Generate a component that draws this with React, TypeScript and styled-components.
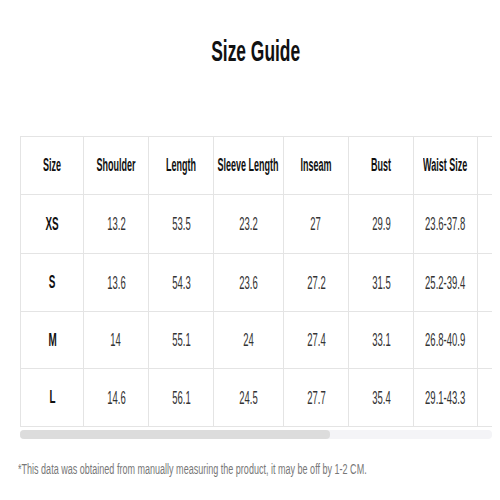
import React from "react";
import styled, { createGlobalStyle } from "styled-components";

const GlobalStyle = createGlobalStyle`
  html, body {
    margin: 0;
    padding: 0;
    background: #fff;
    font-family: "Liberation Sans", Arial, sans-serif;
  }
`;

const columns = [
  { label: "Size", width: 63 },
  { label: "Shoulder", width: 65 },
  { label: "Length", width: 65 },
  { label: "Sleeve Length", width: 70 },
  { label: "Inseam", width: 65 },
  { label: "Bust", width: 65 },
  { label: "Waist Size", width: 64 },
  { label: "", width: 65 },
];

const rows = [
  { size: "XS", values: ["13.2", "53.5", "23.2", "27", "29.9", "23.6-37.8", ""], height: 59 },
  { size: "S", values: ["13.6", "54.3", "23.6", "27.2", "31.5", "25.2-39.4", ""], height: 58 },
  { size: "M", values: ["14", "55.1", "24", "27.4", "33.1", "26.8-40.9", ""], height: 57 },
  { size: "L", values: ["14.6", "56.1", "24.5", "27.7", "35.4", "29.1-43.3", ""], height: 58 },
];

const App = () => {
  const template = columns.map((c) => `${c.width}px`).join(" ");

  return (
    <>
      <GlobalStyle />
      <Page>
        <Title>
          <Squish $scale={0.58}>Size Guide</Squish>
        </Title>
        <ScrollArea>
          <Grid style={{ gridTemplateColumns: template }}>
            {columns.map((c, i) => (
              <HeadCell key={`h${i}`} $height={58}>
                <Squish $scale={0.5}>{c.label}</Squish>
              </HeadCell>
            ))}
            {rows.map((r) => (
              <React.Fragment key={r.size}>
                <HeadCell $height={r.height}>
                  <Squish $scale={0.55}>{r.size}</Squish>
                </HeadCell>
                {r.values.map((v, j) => (
                  <Cell key={j} $height={r.height}>
                    <Squish $scale={0.5}>{v}</Squish>
                  </Cell>
                ))}
              </React.Fragment>
            ))}
          </Grid>
        </ScrollArea>
        <Track>
          <Thumb />
        </Track>
        <Note>
          <Squish $scale={0.645} $origin="left">
            *This data was obtained from manually measuring the product, it may
            be off by 1-2 CM.
          </Squish>
        </Note>
      </Page>
    </>
  );
};

const Page = styled.div`
  width: 500px;
  height: 500px;
  overflow: hidden;
  padding: 0 8px 0 20px;
  box-sizing: border-box;
`;

const Title = styled.h1`
  margin: 0;
  height: 136px;
  padding-bottom: 35px;
  box-sizing: border-box;
  display: flex;
  align-items: center;
  justify-content: center;
  font-size: 30px;
  font-weight: 700;
  color: #111;
`;

const Squish = styled.span<{ $scale: number; $origin?: string }>`
  display: inline-block;
  white-space: nowrap;
  transform: scaleX(${(p) => p.$scale});
  transform-origin: ${(p) => p.$origin || "center"};
`;

const ScrollArea = styled.div`
  width: 472px;
  overflow: hidden;
`;

const Grid = styled.div`
  display: grid;
  width: max-content;
  border-top: 1px solid #e4e4e4;
  border-left: 1px solid #e4e4e4;
`;

const Cell = styled.div<{ $height: number }>`
  height: ${(p) => p.$height}px;
  box-sizing: border-box;
  display: flex;
  align-items: center;
  justify-content: center;
  border-right: 1px solid #e4e4e4;
  border-bottom: 1px solid #e4e4e4;
  font-size: 19px;
  color: #333;
`;

const HeadCell = styled(Cell)`
  font-size: 18px;
  font-weight: 700;
  color: #111;
`;

const Track = styled.div`
  margin-top: 3px;
  width: 472px;
  height: 9px;
  border-radius: 4px;
  background: #f4f4f7;
`;

const Thumb = styled.div`
  width: 310px;
  height: 100%;
  border-radius: 4px;
  background: #dcdcdc;
`;

const Note = styled.p`
  margin: 22px 0 0 -2px;
  font-size: 14px;
  color: #777;
  line-height: 16px;
`;

export default App;
